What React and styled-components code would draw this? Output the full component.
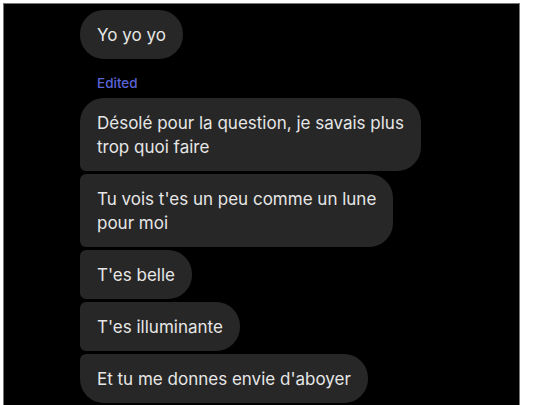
import React from "react";
import styled, { createGlobalStyle } from "styled-components";

const GlobalStyle = createGlobalStyle`
  html, body {
    margin: 0;
    padding: 0;
    background: #fff;
    overflow: hidden;
  }
  body {
    font-family: Inter, "Noto Sans", sans-serif;
  }
`;

const Frame = styled.div`
  margin: 3px 0 0 3px;
  width: 517px;
  height: 420px;
  box-sizing: border-box;
  border: 1px solid #777;
  border-bottom: none;
  background: #000;
  padding: 6px 0 0 76px;
  display: flex;
  flex-direction: column;
  align-items: flex-start;
`;

const Group = styled.div`
  display: flex;
  flex-direction: column;
  align-items: flex-start;
  gap: 3px;
`;

const EditedLabel = styled.div`
  margin: 15px 0 6px 17px;
  font-size: 13.5px;
  font-weight: 500;
  line-height: 18px;
  color: #5a64d9;
`;

const radii = {
  single: "24px",
  first: "24px 24px 24px 6px",
  middle: "6px 24px 24px 6px",
  last: "6px 24px 24px 24px",
};

const Bubble = styled.div`
  background: #272727;
  color: #e6e6e6;
  font-size: 17px;
  line-height: 24px;
  padding: 12.5px 17px;
  border-radius: ${(p) => radii[p.$pos]};
  max-width: 322px;
  white-space: pre-line;
`;

// line breaks kept as they wrap in the app
const messages = [
  "Désolé pour la question, je savais plus\ntrop quoi faire",
  "Tu vois t'es un peu comme un lune\npour moi",
  "T'es belle",
  "T'es illuminante",
  "Et tu me donnes envie d'aboyer",
];

const App = () => {
  const posOf = (i) =>
    i === 0 ? "first" : i === messages.length - 1 ? "last" : "middle";
  return (
    <>
      <GlobalStyle />
      <Frame>
        <Bubble $pos="single">Yo yo yo</Bubble>
        <EditedLabel>Edited</EditedLabel>
        <Group>
          {messages.map((text, i) => (
            <Bubble key={i} $pos={posOf(i)}>
              {text}
            </Bubble>
          ))}
        </Group>
      </Frame>
    </>
  );
};

export default App;
